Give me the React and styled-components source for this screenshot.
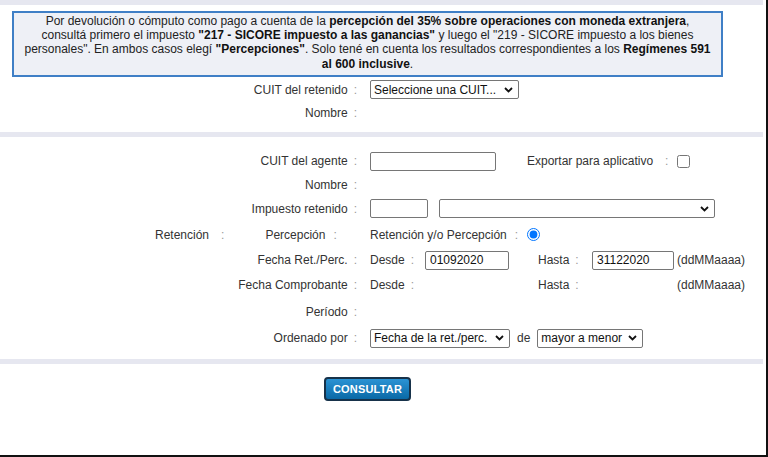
import React from "react";
import styled, { createGlobalStyle } from "styled-components";

const Global = createGlobalStyle`
  html, body { margin: 0; padding: 0; background: #fff; }
  body { font-family: "Liberation Sans", Arial, sans-serif; font-size: 12px; color: #333; }
`;

const Page = styled.div`
  width: 768px;
  height: 457px;
  box-sizing: border-box;
  border-right: 2px solid #111;
  border-bottom: 2px solid #111;
  display: flex;
  flex-direction: column;
  overflow: hidden;
`;

const Band = styled.div`
  height: 5px;
  margin-right: 3px;
  background: #e6e7f0;
  flex: none;
`;

const Notice = styled.div`
  margin: 6px 0 0 12px;
  width: 711px;
  height: 66px;
  box-sizing: border-box;
  border: 2px solid #3f7fc6;
  background: #eef0f6;
  padding: 1px 2px 2px;
  line-height: 14.2px;
  text-align: center;
  white-space: nowrap;
  color: #222;
  b { color: #111; }
`;

const Section = styled.div`
  padding: ${(p) => p.$pt}px 0 ${(p) => p.$pb}px;
  display: flex;
  flex-direction: column;
`;

const Row = styled.div`
  display: grid;
  grid-template-columns: 357px 1fr;
  align-items: center;
  height: ${(p) => p.$h}px;
`;

const LabelCell = styled.div`
  display: flex;
  justify-content: flex-end;
  align-items: center;
  white-space: nowrap;
`;

const SplitLabel = styled(LabelCell)`
  justify-content: flex-start;
  padding-left: 155px;
`;

const Sub = styled.span`
  margin-left: ${(p) => p.$ml || 0}px;
`;

const Colon = styled.span`
  color: #9a9a9a;
  margin-left: ${(p) => (p.$gap == null ? 6 : p.$gap)}px;
`;

const Cell = styled.div`
  padding-left: 13px;
  display: flex;
  align-items: center;
  white-space: nowrap;
`;

const DateGrid = styled.div`
  padding-left: 13px;
  display: grid;
  grid-template-columns: 55px 113px 54px 85px auto;
  align-items: center;
  white-space: nowrap;
`;

const TextInput = styled.input`
  width: ${(p) => p.$w}px;
  height: 19px;
  box-sizing: border-box;
  border: 1px solid #767676;
  border-radius: 2px;
  padding: 0 4px;
  margin: 0;
  font: 12px "Liberation Sans", Arial, sans-serif;
  color: #111;
  background: #fff;
  outline: none;
`;

const SelectWrap = styled.span`
  position: relative;
  display: inline-flex;
  width: ${(p) => p.$w}px;
  margin-left: ${(p) => p.$ml || 0}px;
`;

const SelectBox = styled.select`
  appearance: none;
  -webkit-appearance: none;
  width: 100%;
  height: 19px;
  box-sizing: border-box;
  border: 1px solid #767676;
  border-radius: 2px;
  background: #fff;
  font: 12px "Liberation Sans", Arial, sans-serif;
  color: #111;
  padding: 0 18px 0 3px;
  margin: 0;
  outline: none;
`;

const ChevronBox = styled.span`
  position: absolute;
  right: 6px;
  top: 50%;
  transform: translateY(-50%);
  display: flex;
  pointer-events: none;
`;

const Gap = styled.span`
  display: inline-block;
  width: ${(p) => p.$w}px;
  flex: none;
`;

const Check = styled.input`
  width: 13px;
  height: 13px;
  margin: 0 0 0 ${(p) => p.$ml}px;
`;

const ButtonBar = styled.div`
  padding: 13px 0 0 324px;
  display: flex;
`;

const Button = styled.button`
  width: 87px;
  height: 24px;
  box-sizing: border-box;
  border: 2px solid #17324a;
  border-radius: 4px;
  background: linear-gradient(#2b93d4, #0a69a6);
  color: #fff;
  font: bold 11px "Liberation Sans", Arial, sans-serif;
  letter-spacing: 0.2px;
  padding: 0;
  cursor: pointer;
`;

const Chevron = () => (
  <svg width="9" height="6" viewBox="0 0 9 6">
    <path d="M1 1l3.5 3.5L8 1" fill="none" stroke="#111" strokeWidth="1.8" />
  </svg>
);

const Select = ({ w, ml, children }) => (
  <SelectWrap $w={w} $ml={ml}>
    <SelectBox defaultValue={children}>
      <option>{children}</option>
    </SelectBox>
    <ChevronBox>
      <Chevron />
    </ChevronBox>
  </SelectWrap>
);

const Label = ({ children }) => (
  <LabelCell>
    {children}
    <Colon>:</Colon>
  </LabelCell>
);

export default function App() {
  return (
    <>
      <Global />
      <Page>
        <Band />
        <Notice>
          Por devolución o cómputo como pago a cuenta de la{" "}
          <b>percepción del 35% sobre operaciones con moneda extranjera</b>,
          <br />
          consultá primero el impuesto <b>"217 - SICORE impuesto a las ganancias"</b>{" "}
          y luego el "219 - SICORE impuesto a los bienes
          <br />
          personales". En ambos casos elegí <b>"Percepciones"</b>. Solo tené en
          cuenta los resultados correspondientes a los <b>Regímenes 591</b>
          <br />
          <b>al 600 inclusive</b>.
        </Notice>

        <Section $pt={1} $pb={8}>
          <Row $h={23}>
            <Label>CUIT del retenido</Label>
            <Cell>
              <Select w={149}>Seleccione una CUIT...</Select>
            </Cell>
          </Row>
          <Row $h={23}>
            <Label>Nombre</Label>
            <Cell />
          </Row>
        </Section>

        <Band />

        <Section $pt={12} $pb={8}>
          <Row $h={24}>
            <Label>CUIT del agente</Label>
            <Cell>
              <TextInput $w={126} defaultValue="" />
              <Gap $w={31} />
              <span>Exportar para aplicativo</span>
              <Colon $gap={12}>:</Colon>
              <Check type="checkbox" $ml={9} />
            </Cell>
          </Row>
          <Row $h={23}>
            <Label>Nombre</Label>
            <Cell />
          </Row>
          <Row $h={25}>
            <Label>Impuesto retenido</Label>
            <Cell>
              <TextInput $w={58} defaultValue="" />
              <Select w={276} ml={11}>{""}</Select>
            </Cell>
          </Row>
          <Row $h={27}>
            <SplitLabel>
              <Sub>Retención</Sub>
              <Colon $gap={12}>:</Colon>
              <Sub $ml={41}>Percepción</Sub>
              <Colon $gap={8}>:</Colon>
            </SplitLabel>
            <Cell>
              <span>Retención y/o Percepción</span>
              <Colon $gap={8}>:</Colon>
              <Check type="radio" defaultChecked $ml={9} />
            </Cell>
          </Row>
          <Row $h={24}>
            <Label>Fecha Ret./Perc.</Label>
            <DateGrid>
              <span>
                Desde<Colon>:</Colon>
              </span>
              <TextInput $w={84} defaultValue="01092020" />
              <span>
                Hasta<Colon>:</Colon>
              </span>
              <TextInput $w={82} defaultValue="31122020" />
              <span>(ddMMaaaa)</span>
            </DateGrid>
          </Row>
          <Row $h={26}>
            <Label>Fecha Comprobante</Label>
            <DateGrid>
              <span>
                Desde<Colon>:</Colon>
              </span>
              <span />
              <span>
                Hasta<Colon>:</Colon>
              </span>
              <span />
              <span>(ddMMaaaa)</span>
            </DateGrid>
          </Row>
          <Row $h={27}>
            <Label>Período</Label>
            <Cell />
          </Row>
          <Row $h={26}>
            <Label>Ordenado por</Label>
            <Cell>
              <Select w={140}>Fecha de la ret./perc.</Select>
              <Gap $w={7} />
              <span>de</span>
              <Gap $w={7} />
              <Select w={106}>mayor a menor</Select>
            </Cell>
          </Row>
        </Section>

        <Band />

        <ButtonBar>
          <Button>CONSULTAR</Button>
        </ButtonBar>
      </Page>
    </>
  );
}
